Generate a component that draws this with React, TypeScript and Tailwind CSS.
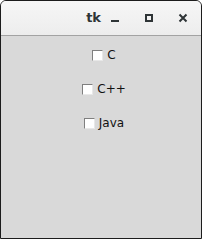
import React from "react";

const langs = ["C", "C++", "Java"];

function Check({ label }: { label: string }) {
  return (
    <label className="flex h-[34px] items-center gap-[4px] pl-[8px] pr-[2px]">
      <span className="block h-[11px] w-[11px] border-t border-l border-t-[#7f7f7f] border-l-[#7f7f7f] border-b border-r border-b-[#e8e8e8] border-r-[#e8e8e8] bg-white" />
      <span className="text-[12px] leading-none text-[#111]">{label}</span>
    </label>
  );
}

export default function App() {
  return (
    <div className="h-[239px] w-[202px] overflow-hidden rounded-t-[6px] border border-[#1c1c1c] bg-[#d9d9d9] font-['DejaVu_Sans',sans-serif]">
      <div className="flex h-[35px] items-center justify-end border-b border-[#a3a3a3] bg-gradient-to-b from-[#f6f6f6] to-[#ededed] pr-[7px]">
        <span className="mr-[3px] text-[13px] font-bold text-[#2e3436]">tk</span>
        <span className="flex h-[20px] w-[22px] items-end justify-center pb-[6px]">
          <span className="block h-[2px] w-[8px] bg-[#2e3436]" />
        </span>
        <span className="ml-[12px] flex h-[20px] w-[22px] items-center justify-center">
          <span className="block h-[8px] w-[8px] border-2 border-[#2e3436]" />
        </span>
        <span className="ml-[12px] flex h-[20px] w-[22px] items-center justify-center">
          <svg width="10" height="10" viewBox="0 0 10 10">
            <path d="M1.5 1.5 L8.5 8.5 M8.5 1.5 L1.5 8.5" stroke="#2e3436" strokeWidth="2" />
          </svg>
        </span>
      </div>
      <div className="flex flex-col items-center pt-[2px]">
        {langs.map((l) => (
          <Check key={l} label={l} />
        ))}
      </div>
    </div>
  );
}
